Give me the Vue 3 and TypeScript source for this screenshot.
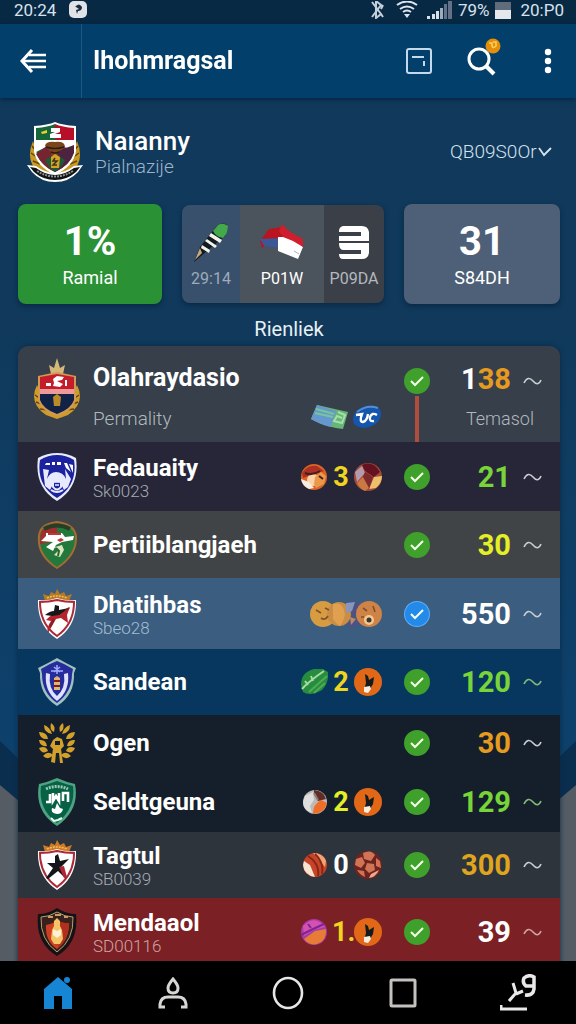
<script setup lang="ts">
import { ref } from 'vue'

type Badge = 'card' | 'pill' | 'burger' | 'mosaic' | 'cookies' | 'leaf' | 'runner' | 'marble' | 'ball' | 'cluster' | 'planet'

interface Row {
  crest: string
  name: string
  sub?: string
  lead?: Badge
  count?: string
  countColor?: string
  trail?: Badge
  value: string
  tone: string
  bg: string
  blueCheck?: boolean
}

const rows: Row[] = [
  { crest: 'fed', name: 'Fedauaity', sub: 'Sk0023', lead: 'burger', count: '3', countColor: 'yellow', trail: 'mosaic', value: '21', tone: 'green', bg: 'violet' },
  { crest: 'pert', name: 'Pertiiblangjaeh', value: '30', tone: 'lemon', bg: 'graphite' },
  { crest: 'dhat', name: 'Dhatihbas', sub: 'Sbeo28', lead: 'cookies', value: '550', tone: 'white', bg: 'steel', blueCheck: true },
  { crest: 'sand', name: 'Sandean', lead: 'leaf', count: '2', countColor: 'yellow', trail: 'runner', value: '120', tone: 'green', bg: 'navy' },
  { crest: 'open', name: 'Ogen', value: '30', tone: 'amber', bg: 'night-a' },
  { crest: 'seld', name: 'Seldtgeuna', lead: 'marble', count: '2', countColor: 'lemon', trail: 'runner', value: '129', tone: 'green', bg: 'night-b' },
  { crest: 'tag', name: 'Tagtul', sub: 'SB0039', lead: 'ball', count: '0', countColor: 'white', trail: 'cluster', value: '300', tone: 'gold', bg: 'slate' },
  { crest: 'mend', name: 'Mendaaol', sub: 'SD00116', lead: 'planet', count: '1.', countColor: 'yellow', trail: 'runner', value: '39', tone: 'white', bg: 'crimson' },
]

const season = ref('QB09S0Or')
</script>

<template>
  <div class="app">
    <div class="status">
      <span class="clock">20:24</span>
      <svg class="app-dot" viewBox="0 0 18 18" width="18" height="18"><rect width="18" height="17" rx="5" fill="#dfe3e8" /><path d="M6 6q4-5 7 0q0 4-4 4l-1 3l-1-4l3-1l-3-2z" fill="#1c2c40" /></svg>
      <span class="spacer"></span>
      <svg viewBox="0 0 16 18" width="16" height="18" fill="none" stroke="#c3d0dc" stroke-width="2"><path d="M3 1l9 12-5 4V0l5 4-9 12M12 8l2-4M12 13l2 3" /></svg>
      <svg class="wifi" viewBox="0 0 22 18" width="22" height="18" fill="none" stroke="#dce4ec" stroke-width="2"><path d="M1 4q10-7 20 0M4 8q7-5 14 0M7 11q4-3 8 0" /><path d="M8 13h6l-3 4z" fill="#dce4ec" stroke="none" /></svg>
      <svg class="signal" viewBox="0 0 25 18" width="25" height="18"><path d="M0 15h3v3H0zM5 13h3v5H5zM9 10h3v8H9z" fill="#d9e1e8" /><path d="M13 7h3v11h-3z" fill="#9eabb8" /><path d="M17 3h3v15h-3zM21 0h4v18h-4z" fill="#637286" /></svg>
      <span class="battery-text">79%</span>
      <svg class="battery" viewBox="0 0 16 17" width="16" height="17"><rect width="16" height="8" fill="#606c7b" /><rect y="8" width="16" height="9" fill="#e4e7ec" /></svg>
      <span class="clock">20:P0</span>
    </div>

    <header class="bar">
      <button class="back" aria-label="Back">
        <svg viewBox="0 0 28 26" width="28" height="26" fill="none" stroke="#fff" stroke-width="3"><path d="M13 2L3 13l10 11" /><path d="M10 7h17M4 13h23M10 19h17" stroke-width="2.6" /></svg>
      </button>
      <h1>Ihohmragsal</h1>
      <button class="tool" aria-label="Notes">
        <svg viewBox="0 0 26 28" width="26" height="28" fill="none" stroke="#c5d9ec" stroke-width="2"><rect x="1" y="2" width="24" height="24" rx="2" /><path d="M6 10h12M18 14v5" /></svg>
      </button>
      <button class="tool search" aria-label="Search">
        <svg viewBox="0 0 34 38" width="34" height="38" fill="none"><circle cx="12" cy="21" r="10" stroke="#fff" stroke-width="3" /><path d="M19 28l8 8" stroke="#fff" stroke-width="4" /><circle cx="26" cy="8" r="7.5" fill="#e38f0b" /><path d="M22 5h3v3q1 3 4 0V4h-3" stroke="#ffd058" stroke-width="1.6" /></svg>
      </button>
      <button class="tool more" aria-label="More options">
        <svg viewBox="0 0 8 26" width="8" height="26" fill="#fff"><circle cx="4" cy="4" r="3.2" /><circle cx="4" cy="13" r="3.2" /><circle cx="4" cy="22" r="3.2" /></svg>
      </button>
    </header>

    <main>
      <div class="content">
        <section class="profile">
          <svg class="profile-crest" viewBox="0 0 56 62" width="56" height="62">
            <path d="M6 20q-9 21 8 34l14 4 14-4q17-13 8-34l-6 18-16 14-16-14z" fill="#c99a22" />
            <path d="M5 25l5 6M4 32l7 5M6 40l7 3M51 25l-5 6M52 32l-7 5M50 40l-7 3" stroke="#69430c" stroke-width="1.5" />
            <path d="M7 5q14-1 21-4q7 3 21 4v25q-2 15-21 24Q9 45 7 30z" fill="#fff" />
            <path d="M9 7q12-1 19-4v48Q11 43 9 29z" fill="#17663a" />
            <path d="M28 3q7 3 19 4v22q-2 14-19 22z" fill="#b70f28" />
            <path d="M9 19h38v10l-10-3-9 8-9-8-10 5z" fill="#fff" />
            <path d="M9 33l12-9 7 10v17q-12-5-19-18z" fill="#762332" /><path d="M28 31l19-7v8q-4 12-19 19z" fill="#4c2440" />
            <path d="M18 39l10-6 10 6q-3 7-10 12-7-5-10-12z" fill="#1d5a35" />
            <path d="M18 25q1-5 10-4q10-1 10 5l-7 5-1 7h-5l-1-7z" fill="#7a451a" /><path d="M19 26q9 3 18 0M24 31q4 2 8 0" stroke="#2d1c14" stroke-width="1.5" fill="none" />
            <path d="M24 36l4-3 5 3-1 11h-8z" fill="#d5a228" /><path d="M28 37l-2 3h4l-4 4h4" stroke="#3b351a" fill="none" stroke-width="1.5" />
            <path d="M14 11l6-2v3l-5 1z" fill="#e8cf39" /><path d="M24 7h9v4l-5 2h6v4H23v-4l5-2h-4z" fill="#fff" />
            <path d="M0 44l9 1q19 14 38 0l9-1-5 7q-9 10-23 10T5 51z" fill="#fff" />
            <path d="M3 46l6 1q19 14 38 0l6-1-4 5q-9 8-21 8T7 51z" fill="#101315" /><path d="M10 50q18 11 36 0" stroke="#8b8f8e" stroke-width="2" stroke-dasharray="2 1" fill="none" />
          </svg>
          <div class="profile-text">
            <h2>Naıanny</h2>
            <p>Pialnazije</p>
          </div>
          <label class="picker">
            <select v-model="season" aria-label="Season"><option>QB09S0Or</option></select>
            <svg viewBox="0 0 14 10" width="14" height="10" fill="none" stroke="#d5e2ee" stroke-width="1.8"><path d="M1 1l5 7 7-7" /></svg>
          </label>
        </section>

        <section class="stats">
          <div class="stat green-card"><strong>1%</strong><span>Ramial</span></div>
          <div class="segments">
            <button class="seg seg-a">
              <svg viewBox="0 0 36 40" width="36" height="40"><path d="M1 39L7 24 23 4q4-5 10-3l2 4-3 8L14 28z" fill="#131b20" /><path d="M20 8l5-6q5-3 10 1 0 7-5 12-7-1-10-7z" fill="#43a94b" /><path d="M16 13l11 7 2-3-11-7zM12 18l10 7 2-2-10-7zM8 25l8 5 1-3-8-5z" fill="#f4f3e9" /><path d="M2 37l5-12 2 5z" fill="#c4a97d" /></svg>
              <span>29:14</span>
            </button>
            <button class="seg seg-b">
              <svg viewBox="0 0 46 40" width="46" height="40"><path d="M1 18L10 6l13-2 5 8-5 5-11 1-9 7z" fill="#b91420" /><path d="M1 16l22-1-1 10-17-2z" fill="#3c5796" /><path d="M19 14h15l10 10-5 12-20-8z" fill="#fff" /><path d="M23 1q6 8 21 15v8l-10-6-10-4-4-6z" fill="#cf1e2c" /><path d="M35 28l5 3" stroke="#aab3bc" /></svg>
              <span>P01W</span>
            </button>
            <button class="seg seg-c">
              <svg viewBox="0 0 32 36" width="32" height="36"><path d="M1 6q0-4 4-5h19q6 0 7 6v9H1v-5h22V7H1zM1 18h30v10q-1 6-7 6H5q-4 0-4-5h22v-4H5q-4 0-4-7z" fill="#fff" /></svg>
              <span>P09DA</span>
            </button>
          </div>
          <div class="stat gray-card"><strong>31</strong><span>S84DH</span></div>
        </section>

        <h3>Rienliek</h3>

        <ul class="list">
          <li class="row lead-row">
            <svg class="crest lead-crest" viewBox="0 0 48 64" width="48" height="64">
              <path d="M4 27q-9 18 9 30l11 4 11-4q18-12 9-30l-7 16-13 10-13-10z" fill="#cf9c2c" /><path d="M2 37l7 5M3 44l8 3M7 51l8 1M46 37l-7 5M45 44l-8 3M41 51l-8 1" stroke="#69430c" stroke-width="1.5" />
              <path d="M18 16l-2-9 5 3 3-10 3 10 5-3-2 9z" fill="#d6b77a" /><path d="M5 18l19-4 19 4v24q-3 11-19 16Q8 53 5 42z" fill="#d09a54" />
              <path d="M7 19l17-3 17 3v12H7z" fill="#c51c2c" /><path d="M7 31h34v5H7z" fill="#ed9a99" /><path d="M7 36h34v6q-3 9-17 14Q10 51 7 42z" fill="#122246" />
              <path d="M13 25h5v3h-5zM20 21l4-3 7 1-2 3-5 1 6 3-3 3-7-1 1-3zM32 22h2v6h-2z" fill="#fff" /><path d="M20 39l4-3 4 3-1 9h-6z" fill="#bd8b25" />
            </svg>
            <div class="name">Olahraydasio</div>
            <div class="lead-sub">Permality</div>
            <div class="lead-icons">
              <svg viewBox="0 0 38 26" width="38" height="26"><path d="M6 1l31 7-5 17Q14 23 0 15z" fill="#67b578" /><path d="M6 1l19 6-5 16Q8 20 0 15z" fill="#6598cd" /><path d="M5 5l18 5M4 9l18 4" stroke="#79c59a" stroke-width="2" /><path d="M27 8l7 3-3 8-8-2 3-5 5 2" stroke="#a5dfa7" stroke-width="2" fill="none" /></svg>
              <svg viewBox="0 0 30 25" width="30" height="25"><path d="M1 15q0-9 9-13 16-5 19 5 1 8-7 13-11 6-19 0-2-2-2-5z" fill="#1455ad" /><path d="M5 7q10-8 21-4" stroke="#588ec9" stroke-width="2" fill="none" /><path d="M4 10l6-1q-3 8 1 8 4-1 5-8M25 10q-5-3-7 2-1 5 4 4" stroke="#fff" stroke-width="2.4" fill="none" /></svg>
            </div>
            <div class="check"><svg viewBox="0 0 26 26" width="26" height="26"><circle cx="13" cy="13" r="13" fill="#3fa02b" /><path d="M7 13l4 4 8-8" fill="none" stroke="#f2ffe6" stroke-width="2" /></svg></div>
            <div class="stem"></div>
            <div class="value amber"><span class="white">1</span>38</div>
            <svg class="wave" viewBox="0 0 19 10" width="19" height="10"><path d="M1 7Q5-1 10 5T18 4" fill="none" stroke="#c7cdd2" stroke-width="1.6" /></svg>
            <div class="lead-label">Temasol</div>
          </li>

          <li v-for="row in rows" :key="row.name" class="row" :class="row.bg">
            <svg v-if="row.crest === 'fed'" class="crest" viewBox="0 0 40 50" width="40" height="50">
              <path d="M20 1q10 0 19 5 4 29-19 43Q-3 35 1 6 10 1 20 1z" fill="#e9ecff" /><path d="M20 3q9 0 17 5 4 25-17 38Q-1 33 3 8 11 3 20 3z" fill="#1c239e" />
              <path d="M8 13h5v-2H9zM15 10h3v3h-3zM20 10h4v3h-4z" fill="#fff" /><path d="M6 17l6 1-2 9q3-7 9-7 7 0 10 7l-1-10 6 10-3 8-4 3-3-6q-4-4-8 0l-3 6-5-4z" fill="#e7eaff" /><path d="M16 28q4-5 8 0v7q-4 5-8 0zM14 38q6 4 12 0" stroke="#e7eaff" stroke-width="2" fill="none" /><path d="M18 30h4M18 33h4" stroke="#e7eaff" stroke-width="1.4" />
              <path d="M27 11h3l4 9-5-4zM32 12l4 1v8z" fill="#fff" />
            </svg>
            <svg v-else-if="row.crest === 'pert'" class="crest" viewBox="0 0 40 50" width="40" height="50">
              <path d="M1 16Q2 3 20 1q18 2 20 15 1 20-20 33Q-1 36 1 16z" fill="#a56b35" /><path d="M3 16Q4 5 20 3q16 2 18 13 1 18-18 31Q1 34 3 16z" fill="#23783b" /><path d="M4 12Q9 4 20 3v18L3 24z" fill="#a32c2c" /><path d="M7 9q13-7 26 0" stroke="#263e26" stroke-width="4" fill="none" />
              <path d="M9 13h16l3 4 9-1-1 4-11 2-6 3-3 6-7-4 7-5-12-1 5-5z" fill="#fff" /><path d="M11 13h13v2H11zM20 20l4-2 3 2-4 2z" fill="#c13735" /><path d="M18 27l7-2 2 5-4 7-6-2 4-4z" fill="#dce5bd" /><path d="M19 28l3 3-1 5" stroke="#27672e" stroke-width="2" fill="none" />
            </svg>
            <svg v-else-if="row.crest === 'dhat' || row.crest === 'tag'" class="crest" viewBox="0 0 40 50" width="40" height="50">
              <path d="M8 12L6 5l6 2 2-4 4 2 2-5 3 5 4-2 2 4 6-2-3 7z" :fill="row.crest === 'dhat' ? '#b77a24' : '#cf7a25'" /><path d="M10 9q10-4 20 0" stroke="#f1bd5c" stroke-width="1.5" stroke-dasharray="2 1" fill="none" />
              <path d="M1 11q10 1 19-2 9 3 19 2 1 26-19 39Q0 37 1 11z" fill="#fff" /><path d="M3 13q9 0 17-2 8 2 17 2 0 22-17 34Q3 35 3 13z" fill="#fff" stroke="#ac2937" stroke-width="2" />
              <g v-if="row.crest === 'dhat'"><path d="M9 31q5-6 16-9l8-4-3 8 1 8-7-5-5 1-8 14q-2-5 3-12z" fill="#b5242d" /><path d="M8 26q5-4 9-4l1-6 4 1v4l10-2-10 7-7 1z" fill="#15171b" /><path d="M13 38l4-8M28 22l4-3" stroke="#852026" stroke-width="2" /></g>
              <g v-else><path d="M18 16l3-2 2 7 9-2-8 8 5 12-8-8-10 8-2-1 7-10-6-5h8z" fill="#121619" /><path d="M22 27l5-1 1 4 2 7-3 1z" fill="#b12435" /></g>
            </svg>
            <svg v-else-if="row.crest === 'sand'" class="crest" viewBox="0 0 40 50" width="40" height="50">
              <path d="M1 11l10-5 9-5 9 5 10 5-2 5q1 22-17 33Q2 38 3 16z" fill="#9fc2bd" /><path d="M4 12l9-5 7-3 7 3 9 5-1 5q0 18-15 29Q5 36 5 17z" fill="#262c9b" /><path d="M9 16l4 1q-2 14 7 22 9-8 7-22l4-1q2 18-11 28Q7 34 9 16z" fill="#dee2ff" /><path d="M14 14h12M20 8v9M17 10l6 5M23 10l-6 5" stroke="#a0adff" stroke-width="1.5" /><path d="M17 21l3-2 3 2v12h-6z" fill="#d9b777" /><path d="M17 24h6M17 29h6" stroke="#811824" stroke-width="2" />
            </svg>
            <svg v-else-if="row.crest === 'open'" class="crest" viewBox="0 0 40 42" width="40" height="42" fill="#d3a02c">
              <path d="M14 1q5 3 3 9-5-2-3-9zM7 3q6 2 8 9-8-1-8-9zM2 10q8 0 9 7-8 1-9-7zM2 18q7-1 8 6-7 1-8-6zM2 26q7-3 9 3-6 4-9-3zM6 34q5-6 10-1-4 6-10 1z" />
              <path d="M26 1q-5 3-3 9 5-2 3-9zM33 3q-6 2-8 9 8-1 8-9zM38 10q-8 0-9 7 8 1 9-7zM38 18q-7-1-8 6 7 1 8-6zM38 26q-7-3-9 3 6 4 9-3zM34 34q-5-6-10-1 4 6 10 1z" />
              <path d="M14 40l2-13-3-3 3-6 4-3 5 2 2 7-3 3 2 14h-3l-1-10h-3l-1 10zM18 19v4h5v-4z" fill-rule="evenodd" />
            </svg>
            <svg v-else-if="row.crest === 'seld'" class="crest" viewBox="0 0 40 50" width="40" height="50">
              <path d="M2 7q9-2 18-6 9 4 18 6 5 26-18 42Q-3 34 2 7z" fill="#4da384" /><path d="M4 9q8-2 16-5 8 3 16 5 3 22-16 37Q1 32 4 9z" fill="#076144" /><path d="M9 12q11-5 22 0" stroke="#9bc9b5" stroke-width="3" stroke-dasharray="2 1" fill="none" /><path d="M9 25h4v-8M16 16v8l3-5 3 5v-8M26 24v-8h5v9" stroke="#fff" stroke-width="2.6" fill="none" /><path d="M20 26l3 5 3 1q-1 5-6 5-7-1-5-6l3 1z" fill="#fff" /><path d="M14 41l3 3 4-1 4-2" stroke="#e6fff1" stroke-width="2" fill="none" />
            </svg>
            <svg v-else class="crest" viewBox="0 0 40 50" width="40" height="50">
              <path d="M1 7q10 0 19-6 9 6 19 6 3 29-19 42Q-2 36 1 7z" fill="#151217" /><path d="M4 10q8 0 16-5 8 5 16 5 1 23-16 35Q3 33 4 10z" fill="#38201e" stroke="#b5a06c" stroke-width="1" /><path d="M9 18q7-1 11-5 5 4 12 3 0 17-12 26Q8 34 9 18z" fill="#ce3f22" /><path d="M20 13q6 4 12 3 0 17-12 26l6-15z" fill="#b0301c" /><path d="M11 10h5M18 8h6M27 10h4" stroke="#cb9a60" stroke-width="2" /><path d="M17 14l3-3 3 3v5l2 4 1 9-3 5h-6l-3-5 1-9 2-4z" fill="#f5c466" /><path d="M16 22l4 2 4-2v6l-4 3-4-3z" fill="#fff0da" />
            </svg>

            <div class="names">
              <div class="name">{{ row.name }}</div>
              <div v-if="row.sub" class="sub">{{ row.sub }}</div>
            </div>

            <div class="extras">
              <template v-for="(badge, i) in [row.lead, row.trail]" :key="i">
                <span v-if="i === 1 && row.count" class="count" :class="row.countColor">{{ row.count }}</span>
                <svg v-if="badge === 'cookies'" viewBox="0 0 72 28" width="72" height="28">
                  <circle cx="13" cy="14" r="13" fill="#d79b42" /><circle cx="42" cy="14" r="13" fill="#4d5283" /><circle cx="29" cy="14" r="12" fill="#c98d45" /><path d="M23 4q10-3 12 10-2 9-5 12-4-2-7-7z" fill="#e1a050" /><path d="M36 3l9-1-3 9-6 2z" fill="#8696bd" /><path d="M40 17l6 2-5 6z" fill="#b98a67" /><circle cx="59" cy="14" r="13" fill="#cf8346" /><path d="M6 10l5 3M15 8l4 2M11 18q4 3 7-2M53 8l4 3M63 6l2 6M51 17h3" stroke="#7e502d" stroke-width="1.6" fill="none" /><circle cx="59" cy="20" r="5" fill="#f4c993" /><circle cx="59" cy="20" r="2.5" fill="#39362f" />
                </svg>
                <svg v-else-if="badge" class="badge" viewBox="0 0 28 28" width="28" height="28">
                  <g v-if="badge === 'burger'"><circle cx="14" cy="14" r="13" fill="#d96528" /><path d="M2 10Q8 1 17 3l7 5-13 4-8 3z" fill="#ad3023" /><circle cx="13" cy="17" r="6" fill="#ffd3aa" /><path d="M1 16l8 3 5 6-5 1q-7-3-8-10z" fill="#f8eee0" /><path d="M15 14l6-5 5 4-2 8-8 4-2-4z" fill="#eb9849" /><path d="M5 10q7 3 15-2M19 13l4 3" stroke="#421f20" stroke-width="2" fill="none" /></g>
                  <g v-else-if="badge === 'mosaic'"><circle cx="14" cy="14" r="14" fill="#a84935" /><path d="M8 2q11-5 18 7l-6 5-9-6z" fill="#641222" /><path d="M1 9l7-6 3 7-8 9z" fill="#b29bad" /><path d="M20 14l8-1q0 7-6 12l-7 1z" fill="#ebbf6b" /><path d="M11 9l8 5-4 12-9-5z" fill="#7c2a2e" /><path d="M3 20l6-6 6 11-4 3q-5-2-8-8z" fill="#ca7945" /></g>
                  <g v-else-if="badge === 'leaf'"><path d="M1 17Q1 4 14 1h9l5 3q1 11-6 18Q10 29 3 24z" fill="#278c3f" /><path d="M9 24L27 8M14 25l11-10" stroke="#4eab55" stroke-width="2" /><path d="M2 21Q8 14 24 3M5 13l3 4M11 8l2 5" stroke="#a5dc9f" stroke-width="2" fill="none" /></g>
                  <g v-else-if="badge === 'runner'"><circle cx="14" cy="14" r="14" fill="#e26818" /><path d="M11 6l3 2 1 4 5-3-1 7-3 5-6 1 2-7z" fill="#151a1d" /><path d="M10 19l6-1 1 3-3 4-4-1z" fill="#f7eee0" /></g>
                  <g v-else-if="badge === 'marble'"><circle cx="15" cy="14" r="12" fill="#bdb9b5" /><path d="M13 26q11 0 14-11l-6-3q-8 4-8 14z" fill="#ef6d26" /><path d="M14 2q10 1 12 9l-8 2-4-7z" fill="#602c25" /><path d="M5 8l8-4 1 8-4 6 2 7Q3 22 3 14z" fill="#dedede" /><path d="M14 5l4 7" stroke="#877f7d" stroke-width="2" fill="none" /></g>
                  <g v-else-if="badge === 'ball'"><circle cx="15" cy="14" r="12" fill="#c64427" /><path d="M13 2q10 0 13 8l-1 6z" fill="#f0a477" /><path d="M4 10l6 4 5 12Q4 24 3 14z" fill="#f9e4d2" /><path d="M8 5q12 8 10 20M15 3q9 8 7 20" stroke="#872816" stroke-width="2" fill="none" /></g>
                  <g v-else-if="badge === 'cluster'"><circle cx="14" cy="14" r="14" fill="#6f231f" /><path d="M9 2q8-4 12 2l-4 6-7-2zM2 8l6-2 3 6-4 5-6-3zM13 12l7 1 1 6-6 3-4-4zM22 7l4 3 1 7-5-2zM3 19l7 1 1 6q-5-2-8-7z" fill="#cf7556" /><path d="M17 23l8-4q-3 7-10 8z" fill="#f0a98a" /></g>
                  <g v-else><circle cx="14" cy="14" r="13" fill="#a83aa8" /><path d="M4 21l11-8 11-2q1 12-9 15-8 2-13-5z" fill="#e77c36" /><path d="M3 8q12-12 22 1l-11 3-10 6z" fill="#d451b1" /><path d="M1 17l10-5 13-6M8 6l3 4" stroke="#7d2592" stroke-width="2" /></g>
                </svg>
              </template>
            </div>

            <div class="check"><svg viewBox="0 0 26 26" width="26" height="26"><circle cx="13" cy="13" r="13" :fill="row.blueCheck ? '#5bb0f5' : '#3fa02b'" /><circle v-if="row.blueCheck" cx="13" cy="13" r="12" fill="#248aea" /><path d="M7 13l4 4 8-8" fill="none" stroke="#f2ffe6" stroke-width="2" /></svg></div>
            <div class="value" :class="row.tone">{{ row.value }}</div>
            <svg class="wave" :class="{ tinted: row.tone === 'green' && row.lead !== 'burger' }" viewBox="0 0 19 10" width="19" height="10"><path d="M1 7Q5-1 10 5T18 4" fill="none" stroke="currentColor" stroke-width="1.6" /></svg>
          </li>
        </ul>
      </div>
    </main>

    <nav>
      <button aria-label="Home"><svg viewBox="0 0 30 34" width="30" height="34" fill="#1685d3"><path d="M1 13L15 1l14 12v20H19V20h-8v13H1z" /><circle cx="24" cy="4" r="3" /></svg></button>
      <button aria-label="Profile"><svg viewBox="0 0 32 34" width="32" height="34" fill="none" stroke="#d6d6d3" stroke-width="3"><path d="M16 3q5 6 5 9 0 5-5 5t-5-5q0-3 5-9zM8 31H3v-3q1-7 8-7h10q7 0 8 7v3h-5" /></svg></button>
      <button aria-label="Center"><svg viewBox="0 0 32 34" width="32" height="34" fill="none" stroke="#e6e6e6" stroke-width="2.6"><ellipse cx="16" cy="17" rx="14" ry="15" /></svg></button>
      <button aria-label="Recent"><svg viewBox="0 0 28 30" width="28" height="30" fill="none" stroke="#c4c1be" stroke-width="3"><rect x="2" y="2" width="24" height="26" rx="1" /></svg></button>
      <button aria-label="Draw"><svg viewBox="0 0 36 38" width="36" height="38" fill="none" stroke="#e9e9e7" stroke-width="3"><path d="M13 9l3 10-7 8M16 20l7-3M1 31v4h26" /><path d="M34 12h-8q-4-3-2-8 5-4 10-1v12q-1 7-9 6" stroke-width="3.5" /></svg></button>
    </nav>
  </div>
</template>

<style>
body { margin: 0; background: #000; }
</style>

<style scoped>
* { box-sizing: border-box; }
.app { height: 100vh; display: flex; flex-direction: column; overflow: hidden; font-family: Roboto, "Liberation Sans", sans-serif; color: #fff; background: #10395b; }
button { border: 0; padding: 0; background: none; color: inherit; font: inherit; display: flex; align-items: center; justify-content: center; }
svg { display: block; flex: none; }
h1, h2, h3, p, ul { margin: 0; padding: 0; }

.status { height: 24px; flex: none; display: flex; align-items: center; padding: 0 12px 4px 14px; background: #082944; font-size: 17px; line-height: 20px; color: #d7e2ec; }
.app-dot { margin-left: 13px; }
.spacer { flex: 1; }
.wifi { margin-left: 11px; }
.signal { margin-left: 9px; }
.battery-text { margin-left: 6px; }
.battery { margin: 0 9px 0 6px; }

.bar { height: 74px; flex: none; display: flex; align-items: center; background: #023f6b; box-shadow: 0 1px 5px #04203b; z-index: 1; padding-right: 24px; }
.back { width: 82px; height: 74px; border-right: 1px solid #205780; padding-right: 16px; }
h1 { flex: 1; padding-left: 11px; font-size: 25px; line-height: 32px; font-weight: 700; }
.search { padding-bottom: 8px; margin-left: 35px; }
.more { margin-left: 43px; }

main { flex: 1; min-height: 0; overflow-y: auto; scrollbar-width: none; background: #555c63; }
.content { position: relative; padding: 22px 16px 0 18px; isolation: isolate; }
.content::before, .content::after { content: ""; position: absolute; inset: 0; z-index: -1; background: linear-gradient(#10395b 0 220px, #0d406b 600px); clip-path: polygon(0 0, 100% 0, 100% 643px, calc(100% - 40px) 681px, 40px 681px, 0 643px); }
.content::before { background: #0a2e4e; z-index: -2; clip-path: polygon(0 0, 100% 0, 100% 687px, calc(100% - 40px) 721px, 40px 721px, 0 687px); }

.profile { display: flex; align-items: center; height: 64px; padding: 0 8px 0 9px; }
.profile-text { flex: 1; padding-left: 12px; }
h2 { font-size: 26px; line-height: 30px; font-weight: 500; }
.profile-text p { font-size: 19px; line-height: 22px; color: #9cb4ca; font-weight: 300; }
.picker { display: flex; align-items: center; gap: 1px; }
.picker select { appearance: none; border: 0; padding: 0; background: none; font: 300 19px/24px Roboto, sans-serif; color: #d5e2ee; }

.stats { display: grid; grid-template-columns: 144fr 202fr 156fr; gap: 20px; margin-top: 20px; align-items: center; }
.stat { height: 100px; border-radius: 8px; display: flex; flex-direction: column; align-items: center; justify-content: center; box-shadow: 0 2px 5px #0a2844; }
.stat strong { font-size: 40px; line-height: 48px; font-weight: 700; }
.stat span { font-size: 18px; line-height: 24px; }
.green-card { background: #2b9135; }
.gray-card { background: #4e6078; }
.segments { display: flex; height: 98px; border-radius: 8px; overflow: hidden; box-shadow: 0 2px 5px #0a2844; }
.seg { flex-direction: column; gap: 6px; font-size: 16px; line-height: 20px; padding-top: 4px; }
.seg svg { height: 40px; }
.seg-a { flex: 58; background: #38506c; color: #9dacbb; }
.seg-b { flex: 84; background: #4b535d; }
.seg-c { flex: 60; background: #3b3f48; color: #b4b8bd; }
h3 { font-size: 20px; line-height: 24px; font-weight: 400; text-align: center; margin: 13px 0 5px; color: #e8f0f6; }

.list { list-style: none; border-radius: 10px 10px 0 0; overflow: hidden; box-shadow: 0 0 5px #0a2844; }
.row { display: grid; grid-template-columns: 44px 1fr auto 26px 69px 19px; column-gap: 12px; align-items: center; padding: 0 18px 0 19px; height: 66px; }
.name { font-size: 24px; line-height: 28px; font-weight: 700; white-space: nowrap; }
.sub { font-size: 17px; line-height: 18px; color: #a5abb5; font-weight: 300; }
.extras { display: flex; align-items: center; gap: 4px; padding-right: 10px; }
.count { width: 18px; font-size: 27px; line-height: 32px; font-weight: 700; text-align: center; }
.value { font-size: 29px; line-height: 34px; font-weight: 700; text-align: right; }
.wave { color: #c7cdd2; }
.wave.tinted { color: #85bc78; }

.white { color: #fff; }
.yellow { color: #efd51d; }
.lemon { color: #e4ef26; }
.green { color: #78d439; }
.amber { color: #e79a20; }
.gold { color: #dfa51e; }

.lead-row { height: 96px; background: #363f4a; grid-template-rows: 50px 46px; }
.lead-row .lead-crest { grid-row: 1 / 3; grid-column: 1; margin-left: -4px; align-self: start; margin-top: 12px; }
.lead-row .name { grid-row: 1; grid-column: 2 / 4; align-self: end; padding-bottom: 4px; font-size: 25px; }
.lead-sub { grid-row: 2; grid-column: 2; font-size: 19px; line-height: 44px; color: #b3b8bd; font-weight: 300; }
.lead-icons { grid-row: 2; grid-column: 3; display: flex; align-items: center; gap: 3px; padding: 0 10px 4px 0; }
.lead-row .check { grid-row: 1; grid-column: 4; align-self: end; padding-bottom: 2px; }
.stem { grid-row: 2; grid-column: 4; justify-self: center; align-self: stretch; width: 4px; background: #b14d3d; }
.lead-row .value { grid-row: 1; grid-column: 5; align-self: end; }
.lead-row .wave { grid-row: 1; grid-column: 6; align-self: end; margin-bottom: 10px; }
.lead-label { grid-row: 2; grid-column: 5 / 7; text-align: right; font-size: 18px; line-height: 44px; padding-right: 8px; color: #b3b8bd; font-weight: 300; }

.violet { background: #262638; height: 69px; }
.graphite { background: #414447; height: 67px; }
.steel { background: #3b5d80; height: 71px; }
.steel .sub { color: #a3bdd5; }
.navy { background: #07375e; }
.night-a { background: #151f2b; height: 56px; }
.night-b { background: #151f2b; height: 61px; }
.slate { background: #2e343c; }
.crimson { background: #7b2025; height: 68px; }
.crimson .sub, .crimson .wave { color: #d1a4a4; }

nav { height: 63px; flex: none; display: grid; grid-template-columns: repeat(5, 1fr); background: #000; }
</style>
